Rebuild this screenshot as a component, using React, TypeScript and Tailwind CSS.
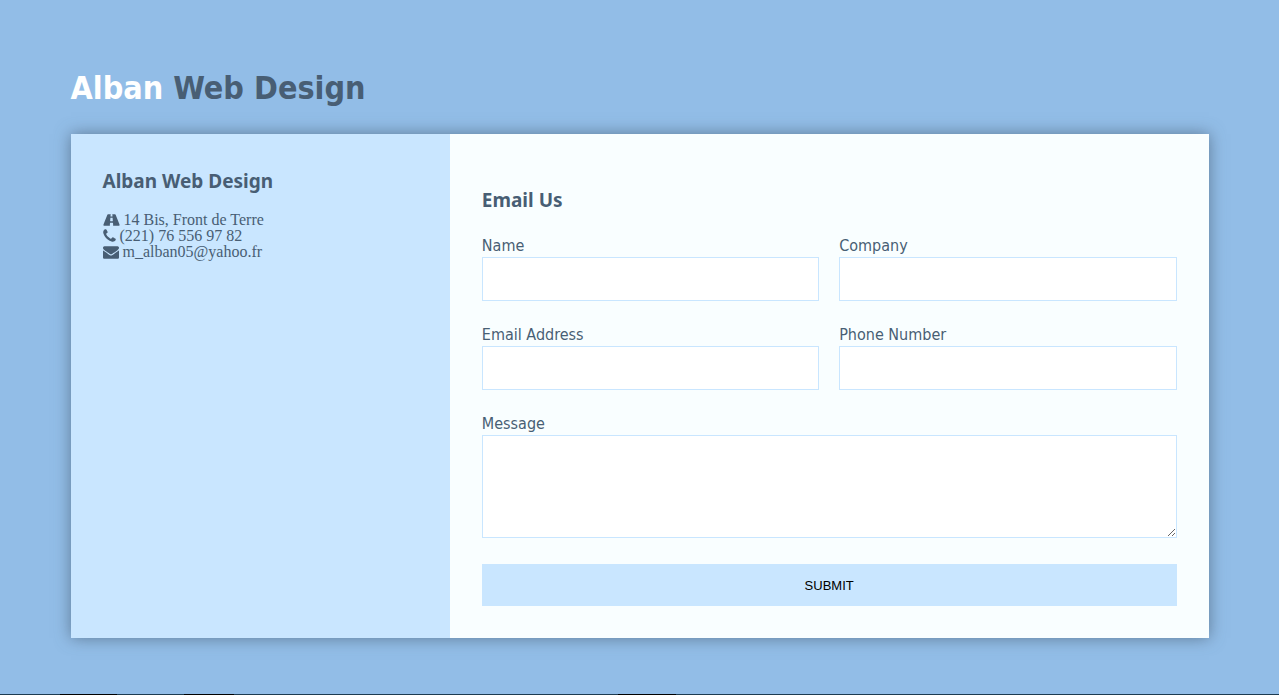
import type { ReactNode } from "react";

const ROAD =
  "M1111 540v4l-24 320q-1 13 -11 22.5t-23 9.5h-186q-13 0 -23 -9.5t-11 -22.5l-24 -320v-4q-1 -12 8 -20t21 -8h244q12 0 21 8t8 20zM1870 73q0 -73 -46 -73h-704q13 0 22 9.5t8 22.5l-20 256q-1 13 -11 22.5t-23 9.5h-272q-13 0 -23 -9.5t-11 -22.5l-20 -256q-1 -13 8 -22.5t22 -9.5h-704q-46 0 -46 73q0 54 26 116l417 1044q8 19 26 33t38 14h339q-13 0 -23 -9.5t-11 -22.5l-15 -192q-1 -14 8 -23t22 -9h166q13 0 22 9t8 23l-15 192q-1 13 -11 22.5t-23 9.5h339q20 0 38 -14t26 -33l417 -1044q26 -62 26 -116z";
const PHONE =
  "M1600 1240q0 27-10 70.5t-21 68.5q-21 50-122 106-94 51-186 51-27 0-53-3.5t-57.5-12.5-47-14.5-55.5-20.5-49-18q-98-35-175-83-127-79-264-216t-216-264q-48-77-83-175-3-9-18-49t-20.5-55.5-14.5-47-12.5-57.5-3.5-53q0-92 51-186 56-101 106-122 25-11 68.5-21t70.5-10q14 0 21 3 18 6 53 76 11 19 30 54t35 63.5 31 53.5q3 4 17.5 25t21.5 35.5 7 28.5q0 20-28.5 50t-62 55-62 53-28.5 46q0 9 5 22.5t8.5 20.5 14 24 11.5 19q76 137 174 235t235 174q2 1 19 11.5t24 14 20.5 8.5 22.5 5q18 0 46-28.5t53-62 55-62 50-28.5q14 0 28.5 7t35.5 21.5 25 17.5q25 15 53.5 31t63.5 35 54 30q70 35 76 53 3 7 3 21z";
const ENVELOPE =
  "M1792 710v794q0 66-47 113t-113 47h-1472q-66 0-113-47t-47-113v-794q44 49 101 87 362 246 497 345 57 42 92.5 65.5t94.5 48 110 24.5h2q51 0 110-24.5t94.5-48 92.5-65.5q170-123 498-345 57-39 100-87zm0-294q0 79-49 151t-122 123q-376 261-468 325-10 7-42.5 31t-54 38.5-52 32.5-57.5 27-50 9h-2q-23 0-50-9t-57.5-27-52-32.5-54-38.5-42.5-31q-91-64-262-182.5t-205-142.5q-62-42-117-115.5t-55-136.5q0-78 41.5-130t118.5-52h1472q65 0 112.5 47t47.5 113z";

function Field({ id, label, type = "text" }: { id: string; label: string; type?: string }) {
  return (
    <div>
      <label htmlFor={id} className="block pb-0.5 leading-[18px]">
        {label}
      </label>
      <input
        id={id}
        name={id}
        type={type}
        className="block h-11 w-full border border-[#c9e6ff] bg-white px-3 outline-none"
      />
    </div>
  );
}

function ContactRow({ icon, children }: { icon: ReactNode; children: ReactNode }) {
  return (
    <li className="flex items-center gap-1">
      {icon}
      <span>{children}</span>
    </li>
  );
}

export default function App() {
  return (
    <div className="flex min-h-screen flex-col bg-[#92bde7] font-['DejaVu_Sans_Condensed','DejaVu_Sans',sans-serif] text-base text-[#485e74]">
      <main className="mx-auto w-full max-w-[1170px] flex-1 px-4 pt-16 pb-14">
        <h1 className="mb-[22px] text-[32px] leading-[48px] font-bold">
          <span className="text-white">Alban</span> Web Design
        </h1>

        <div className="grid bg-[#f9feff] shadow-[0_0_15px_0_rgba(72,94,116,0.7)] md:grid-cols-3">
          <aside className="bg-[#c9e6ff] p-8">
            <h3 className="font-['Noto_Sans',sans-serif] text-[19px] leading-[30px] font-bold">Alban Web Design</h3>
            <ul className="mt-4 font-['Liberation_Serif',serif] leading-4">
              <ContactRow
                icon={
                  <svg viewBox="0 0 1920 1792" className="h-4 w-[17px]" fill="currentColor" aria-hidden="true">
                    <path d={ROAD} transform="translate(0 1536) scale(1 -1)" />
                  </svg>
                }
              >
                14 Bis, Front de Terre
              </ContactRow>
              <ContactRow
                icon={
                  <svg viewBox="192 0 1408 1792" className="h-4 w-[13px]" fill="currentColor" aria-hidden="true">
                    <path d={PHONE} />
                  </svg>
                }
              >
                (221) 76 556 97 82
              </ContactRow>
              <ContactRow
                icon={
                  <svg viewBox="0 0 1792 1792" className="h-4 w-4" fill="currentColor" aria-hidden="true">
                    <path d={ENVELOPE} />
                  </svg>
                }
              >
                m_alban05@yahoo.fr
              </ContactRow>
            </ul>
          </aside>

          <section className="px-8 pt-[51px] pb-8 md:col-span-2">
            <h3 className="font-['Noto_Sans',sans-serif] text-[19px] leading-[30px] font-bold">Email Us</h3>
            <form className="mt-[22px]">
              <div className="grid gap-x-5 gap-y-[25px] sm:grid-cols-2">
                <Field id="name" label="Name" />
                <Field id="company" label="Company" />
                <Field id="email" label="Email Address" type="email" />
                <Field id="phone" label="Phone Number" type="tel" />
                <div className="sm:col-span-2">
                  <label htmlFor="message" className="block pb-0.5 leading-[18px]">
                    Message
                  </label>
                  <textarea
                    id="message"
                    name="message"
                    className="block h-[103px] w-full resize border border-[#c9e6ff] bg-white p-3 outline-none"
                  />
                </div>
              </div>
              <button
                type="button"
                className="mt-[26px] block h-[42px] w-full bg-[#c9e6ff] pt-0.5 font-['Liberation_Sans',sans-serif] text-[13px] text-black uppercase"
              >
                Submit
              </button>
            </form>
          </section>
        </div>
      </main>

      <div className="flex h-px bg-[#1d3b50]" aria-hidden="true">
        <span className="ml-[60px] w-[57px] bg-black" />
        <span className="ml-[67px] w-[50px] bg-black" />
        <span className="ml-[384px] w-[58px] bg-black" />
      </div>
    </div>
  );
}
